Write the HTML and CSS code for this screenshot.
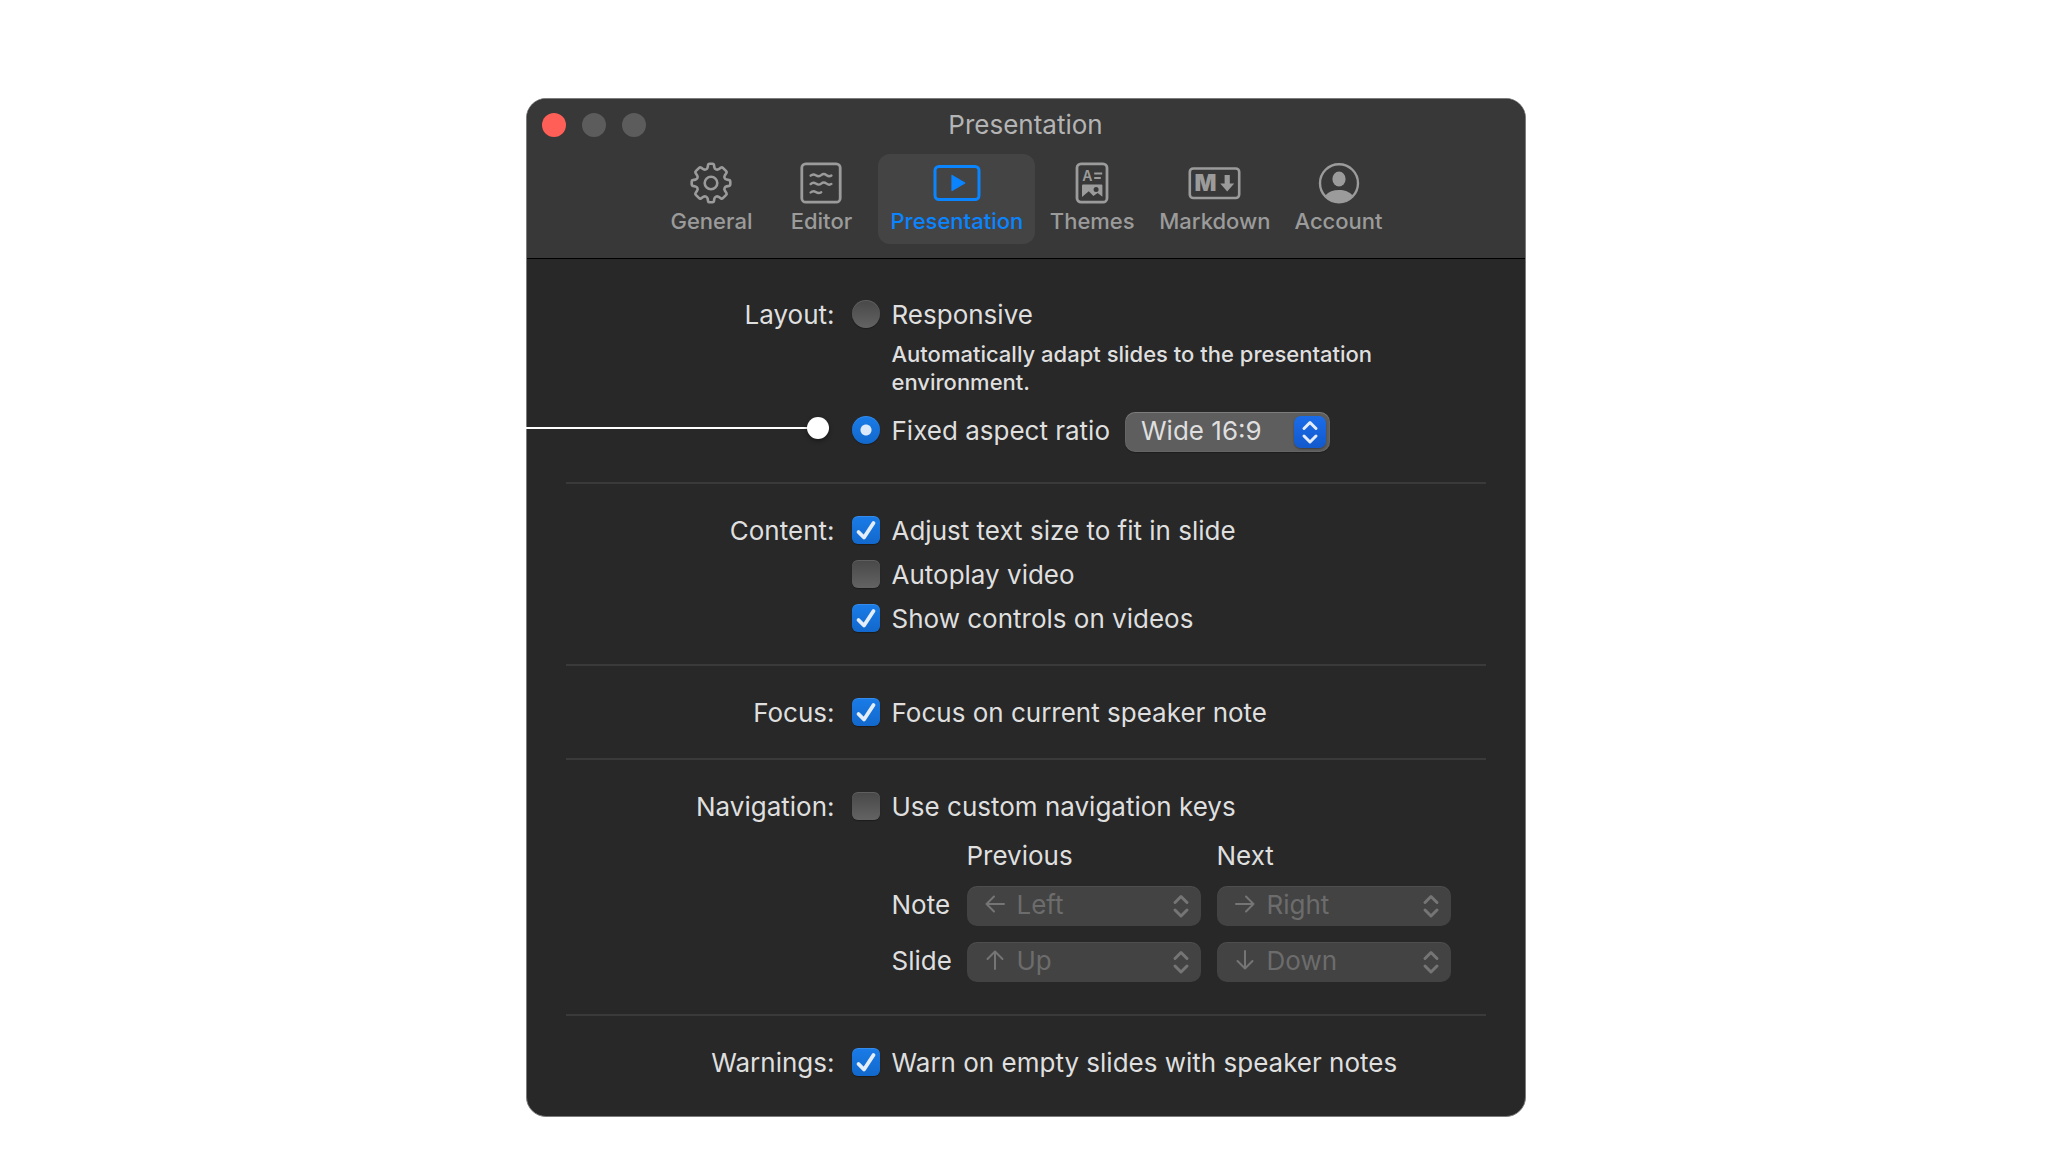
FILE: index.html
```html
<!DOCTYPE html>
<html lang="en">
<head>
<meta charset="utf-8">
<meta name="viewport" content="width=device-width, initial-scale=1">
<title>Presentation</title>
<link rel="stylesheet" href="styles.css">
</head>
<body>
<main class="window">
  <header class="toolbar">
    <div class="titlebar">
      <div class="lights">
        <button class="light light-close" type="button" aria-label="Close"></button>
        <button class="light" type="button" aria-label="Minimize"></button>
        <button class="light" type="button" aria-label="Zoom"></button>
      </div>
      <h1 class="title">Presentation</h1>
    </div>
    <nav class="tabs" aria-label="Settings">
      <button class="tab" type="button">
        <svg class="tab-icon" width="42" height="42" viewBox="-21 -21 42 42" fill="none" stroke="currentColor" stroke-width="2.6" stroke-linejoin="round">
          <path d="M-1.6-19.3H1.6Q2.7-19.3 2.9-18.2L3.4-15.6Q3.7-14.2 5-13.6Q6.3-13 7.6-13.8L9.9-15.4Q11-16.1 11.9-15.2L15.2-11.9Q16.1-11 15.4-9.9L13.8-7.6Q13-6.3 13.6-5Q14.2-3.7 15.6-3.4L18.2-2.9Q19.3-2.7 19.3-1.6V1.6Q19.3 2.7 18.2 2.9L15.6 3.4Q14.2 3.7 13.6 5Q13 6.3 13.8 7.6L15.4 9.9Q16.1 11 15.2 11.9L11.9 15.2Q11 16.1 9.9 15.4L7.6 13.8Q6.3 13 5 13.6Q3.7 14.2 3.4 15.6L2.9 18.2Q2.7 19.3 1.6 19.3H-1.6Q-2.7 19.3-2.9 18.2L-3.4 15.6Q-3.7 14.2-5 13.6Q-6.3 13-7.6 13.8L-9.9 15.4Q-11 16.1-11.9 15.2L-15.2 11.9Q-16.1 11-15.4 9.9L-13.8 7.6Q-13 6.3-13.6 5Q-14.2 3.7-15.6 3.4L-18.2 2.9Q-19.3 2.7-19.3 1.6V-1.6Q-19.3-2.7-18.2-2.9L-15.6-3.4Q-14.2-3.7-13.6-5Q-13-6.3-13.8-7.6L-15.4-9.9Q-16.1-11-15.2-11.9L-11.9-15.2Q-11-16.1-9.9-15.4L-7.6-13.8Q-6.3-13-5-13.6Q-3.7-14.2-3.4-15.6L-2.9-18.2Q-2.7-19.3-1.6-19.3Z"/>
          <circle r="6.3"/>
        </svg>
        <span>General</span>
      </button>
      <button class="tab" type="button">
        <svg class="tab-icon" width="42" height="42" viewBox="0 0 42 42" fill="none" stroke="currentColor" stroke-width="2.8">
          <rect x="1.8" y="1.8" width="38.4" height="38.4" rx="4"/>
          <path stroke-width="2.4" stroke-linecap="round" d="M10.6 13.7C12.4 12 14 12 15.8 13.2S19.4 14.8 21.2 13.2S25 12 26.6 13.2S30 14.6 31.4 13.5M10.6 22.1C12.4 20.4 14 20.4 15.8 21.6S19.4 23.2 21.2 21.6S25 20.4 26.6 21.6S30 23 31.4 21.9M10.6 30.5C12.4 28.8 14 28.8 15.8 30S19.4 31.4 21.2 30.2"/>
        </svg>
        <span>Editor</span>
      </button>
      <button class="tab tab-active" type="button" aria-current="page">
        <svg class="tab-icon" width="48" height="42" viewBox="0 0 48 42">
          <rect x="2" y="4.5" width="44" height="33" rx="4" fill="none" stroke="currentColor" stroke-width="3"/>
          <path d="M19 13.4v15.2L31.8 21Z" fill="currentColor" stroke="currentColor" stroke-width="1.2" stroke-linejoin="round"/>
        </svg>
        <span>Presentation</span>
      </button>
      <button class="tab" type="button">
        <svg class="tab-icon" width="34" height="42" viewBox="0 0 34 42">
          <rect x="2" y="1.8" width="30" height="38.4" rx="4" fill="none" stroke="currentColor" stroke-width="2.8"/>
          <text x="7.2" y="18.6" class="glyph-a">A</text>
          <path d="M19.2 11.4h8M19.2 16h6.6" stroke="currentColor" stroke-width="2"/>
          <path fill="currentColor" fill-rule="evenodd" d="M8 22.5h18.4q1 0 1 1v11.2l-4.8-3.600-4.200 2.800-4.600-4.700-6.800 5.900V23.500q0-1 1-1ZM21.100 25a2.500 2.500 0 1 0 0 5 2.500 2.500 0 0 0 0-5Z"/>
        </svg>
        <span>Themes</span>
      </button>
      <button class="tab" type="button">
        <svg class="tab-icon" width="53" height="42" viewBox="0 0 53 42">
          <rect x="1.8" y="6.5" width="49.4" height="29.5" rx="3.5" fill="none" stroke="currentColor" stroke-width="2.6"/>
          <text x="6.6" y="29.4" class="glyph-m">M</text>
          <path fill="currentColor" d="M36.600 13h5.200v8.600h4.400l-7 7.800-7-7.800h4.400Z"/>
        </svg>
        <span>Markdown</span>
      </button>
      <button class="tab" type="button">
        <svg class="tab-icon" width="42" height="42" viewBox="0 0 42 42">
          <circle cx="21" cy="21.2" r="19" fill="none" stroke="currentColor" stroke-width="2.4"/>
          <ellipse cx="21" cy="17" rx="6.6" ry="7.4" fill="currentColor"/>
          <path fill="currentColor" d="M7.400 33.500C10.400 29.800 15.400 28 21 28s10.600 1.800 13.600 5.500C31 38 26.500 40 21 40S11 38 7.400 33.500Z"/>
        </svg>
        <span>Account</span>
      </button>
    </nav>
  </header>

  <form class="settings">
    <section class="section" role="radiogroup" aria-labelledby="layout-title">
      <h2 class="section-title" id="layout-title">Layout:</h2>
      <div class="fields layout-fields">
        <div class="option">
          <input class="control radio" type="radio" name="layout" id="responsive" aria-describedby="responsive-note">
          <label for="responsive">Responsive</label>
        </div>
        <p class="note" id="responsive-note">Automatically adapt slides to the presentation environment.</p>
        <div class="ratio-row">
          <div class="callout" aria-hidden="true"></div>
          <div class="option option-tall">
            <input class="control radio" type="radio" name="layout" id="fixed" checked>
            <label for="fixed" id="fixed-name">Fixed aspect ratio</label>
          </div>
          <div class="popup popup-ratio">
            <select class="select" aria-labelledby="fixed-name">
              <option>Wide 16:9</option>
            </select>
            <svg class="chevrons chevrons-blue" width="32" height="32" viewBox="0 0 32 32"><path d="M10 12.500 16 6.500l6 6M10 20l6 6 6-6"/></svg>
          </div>
        </div>
      </div>
    </section>

    <section class="section" role="group" aria-labelledby="content-title">
      <h2 class="section-title" id="content-title">Content:</h2>
      <div class="fields">
        <div class="option">
          <input class="control checkbox" type="checkbox" id="fit" checked>
          <label for="fit">Adjust text size to fit in slide</label>
        </div>
        <div class="option">
          <input class="control checkbox" type="checkbox" id="autoplay">
          <label for="autoplay">Autoplay video</label>
        </div>
        <div class="option">
          <input class="control checkbox" type="checkbox" id="controls" checked>
          <label for="controls">Show controls on videos</label>
        </div>
      </div>
    </section>

    <section class="section" role="group" aria-labelledby="focus-title">
      <h2 class="section-title" id="focus-title">Focus:</h2>
      <div class="fields">
        <div class="option">
          <input class="control checkbox" type="checkbox" id="focus" checked>
          <label for="focus">Focus on current speaker note</label>
        </div>
      </div>
    </section>

    <section class="section" role="group" aria-labelledby="navigation-title">
      <h2 class="section-title" id="navigation-title">Navigation:</h2>
      <div class="fields">
        <div class="option">
          <input class="control checkbox" type="checkbox" id="keys">
          <label for="keys">Use custom navigation keys</label>
        </div>
        <div class="keys">
          <span class="keys-previous" id="previous">Previous</span>
          <span id="next">Next</span>
          <label class="keys-label" for="note-previous" id="note">Note</label>
          <div class="popup popup-key">
            <select class="select" id="note-previous" aria-labelledby="note previous" disabled><option>Left</option></select>
            <svg class="arrow" width="20" height="20" viewBox="0 0 20 20"><path d="M19 10H1.500M9 2.500 1.500 10 9 17.500"/></svg>
            <svg class="chevrons" width="32" height="32" viewBox="0 0 32 32"><path d="M10 12.500 16 6.500l6 6M10 20l6 6 6-6"/></svg>
          </div>
          <div class="popup popup-key">
            <select class="select" aria-labelledby="note next" disabled><option>Right</option></select>
            <svg class="arrow" width="20" height="20" viewBox="0 0 20 20"><path d="M1 10h17.500M11 2.500l7.500 7.500-7.500 7.500"/></svg>
            <svg class="chevrons" width="32" height="32" viewBox="0 0 32 32"><path d="M10 12.500 16 6.500l6 6M10 20l6 6 6-6"/></svg>
          </div>
          <label class="keys-label" for="slide-previous" id="slide">Slide</label>
          <div class="popup popup-key">
            <select class="select" id="slide-previous" aria-labelledby="slide previous" disabled><option>Up</option></select>
            <svg class="arrow" width="20" height="20" viewBox="0 0 20 20"><path d="M10 19V1.500M2.500 9 10 1.500 17.500 9"/></svg>
            <svg class="chevrons" width="32" height="32" viewBox="0 0 32 32"><path d="M10 12.500 16 6.500l6 6M10 20l6 6 6-6"/></svg>
          </div>
          <div class="popup popup-key">
            <select class="select" aria-labelledby="slide next" disabled><option>Down</option></select>
            <svg class="arrow" width="20" height="20" viewBox="0 0 20 20"><path d="M10 1v17.500M2.500 11l7.500 7.500 7.500-7.500"/></svg>
            <svg class="chevrons" width="32" height="32" viewBox="0 0 32 32"><path d="M10 12.500 16 6.500l6 6M10 20l6 6 6-6"/></svg>
          </div>
        </div>
      </div>
    </section>

    <section class="section" role="group" aria-labelledby="warnings-title">
      <h2 class="section-title" id="warnings-title">Warnings:</h2>
      <div class="fields">
        <div class="option">
          <input class="control checkbox" type="checkbox" id="warn" checked>
          <label for="warn">Warn on empty slides with speaker notes</label>
        </div>
      </div>
    </section>
  </form>
</main>
</body>
</html>
```

FILE: styles.css
```css
* { box-sizing: border-box; }

body {
  margin: 0;
  padding: 98px 24px 36px 26px;
  background: #fff;
  color: #dfdfdf;
  font: 400 26px/28px Inter, "Liberation Sans", sans-serif;
}

button, input, select { margin: 0; font: inherit; color: inherit; }

.window {
  max-width: 1000px;
  margin: 0 auto;
  border: 1px solid #7c7c7c;
  border-radius: 20px;
  background: #282828;
}

/* Toolbar */
.toolbar {
  padding-bottom: 14px;
  border-bottom: 1px solid #000;
  border-radius: 19px 19px 0 0;
  background: #383838;
}

.titlebar {
  display: grid;
  grid-template-columns: 1fr auto 1fr;
  align-items: center;
  height: 52px;
  padding: 0 15px;
}

.lights { display: flex; gap: 16px; }

.light {
  width: 24px;
  height: 24px;
  padding: 0;
  border: 0;
  border-radius: 50%;
  background: #5c5c5c;
}

.light-close { background: #ff5f57; }

.title {
  margin: 0;
  color: #b4b4b4;
  font-size: 26px;
  font-weight: 400;
}

.tabs {
  display: flex;
  justify-content: center;
  gap: 4px;
  padding-top: 3px;
}

.tab {
  display: flex;
  flex-direction: column;
  align-items: center;
  gap: 3px;
  min-width: 106px;
  height: 90px;
  padding: 8px 10px;
  border: 0;
  border-radius: 12px;
  background: none;
  color: #9b9b9b;
  font-size: 22px;
  font-weight: 500;
}

.tab-active {
  padding: 8px 12px;
  background: #444;
  color: #0a84ff;
}

.glyph-a { font-size: 14px; font-weight: 600; fill: currentColor; }
.glyph-m { font-size: 23px; font-weight: 900; fill: currentColor; }

/* Settings */
.settings { padding: 9px 39px 8px; }

.section {
  display: grid;
  grid-template-columns: minmax(0, 269px) minmax(0, 1fr);
  column-gap: 17px;
  padding: 32px 0;
}

.section + .section { border-top: 2px solid #3a3a3a; }
.section:first-child { padding-bottom: 30px; }

.section-title {
  margin: 0;
  font-size: 26px;
  line-height: 30px;
  height: 28px;
  font-weight: 400;
  text-align: right;
}

.fields { display: flex; flex-direction: column; gap: 16px; }
.layout-fields { gap: 12px; }

.option { display: flex; align-items: center; gap: 12px; height: 28px; }
.option label { padding-top: 2px; }
.option-tall { height: 36px; }

.control {
  flex: none;
  appearance: none;
  width: 28px;
  height: 28px;
  background: linear-gradient(#484848, #636363);
  box-shadow: inset 0 1px 0 #ffffff20, 0 1px 1px #00000050;
}

.radio { border-radius: 50%; }
.checkbox { border-radius: 6px; }
.control:checked { background: linear-gradient(#1a7ce8, #1268cc); }

.radio:checked {
  background: radial-gradient(circle, #dce9fa 5px, transparent 6px), linear-gradient(#1a7ce8, #1268cc);
}

.checkbox:checked {
  background:
    url("data:image/svg+xml,%3Csvg xmlns='http://www.w3.org/2000/svg' viewBox='0 0 28 28'%3E%3Cpath d='M6.500 16 12 21.500 21.500 7' fill='none' stroke='%23e4eefb' stroke-width='3.800' stroke-linecap='round' stroke-linejoin='round'/%3E%3C/svg%3E"),
    linear-gradient(#1a7ce8, #1268cc);
}

.note {
  max-width: 550px;
  margin: 0 0 4px;
  padding-left: 40px;
  font-size: 22px;
  font-weight: 500;
}

.ratio-row { position: relative; display: flex; gap: 15px; }

/* Leader line ending in a dot beside the aspect ratio option */
.callout {
  position: absolute;
  top: 5px;
  right: 100%;
  width: 303px;
  height: 22px;
  margin-right: 23px;
  background: linear-gradient(#fff, #fff) center / 100% 2px no-repeat;
}

.callout::after {
  content: "";
  position: absolute;
  right: 0;
  width: 22px;
  height: 22px;
  border-radius: 50%;
  background: #fff;
  box-shadow: 0 2px 4px #00000060;
}

/* Pop-up menus */
.popup { display: grid; align-items: center; height: 40px; }
.popup > * { grid-area: 1 / 1; }

.select {
  appearance: none;
  width: 100%;
  height: 40px;
  padding: 0 40px 2px 16px;
  border: 0;
  border-radius: 10px;
  background: #5e5e5e;
  box-shadow: inset 0 1px 0 #ffffff28, inset 0 0 0 1px #ffffff0c, 0 1px 1px #00000040;
  line-height: 36px;
}

.popup-ratio { width: 205px; }
.popup-key .select { padding-left: 50px; }

.select:disabled {
  background: #434343;
  color: #6c6c6c;
  opacity: 1;
  box-shadow: inset 0 1px 0 #ffffff10;
}

.arrow, .chevrons {
  pointer-events: none;
  fill: none;
  stroke: #757575;
  stroke-linecap: round;
  stroke-linejoin: round;
}

.arrow { margin: 0 0 4px 18px; stroke-width: 2; }

.chevrons {
  justify-self: end;
  margin-right: 4px;
  stroke-width: 3;
}

.chevrons-blue {
  border-radius: 7px;
  background: linear-gradient(#1b6cea, #1259cc);
  box-shadow: 0 1px 2px #00000060;
  stroke: #e4ecfa;
}

.keys {
  display: grid;
  grid-template-columns: 59px minmax(0, 234px) minmax(0, 234px);
  gap: 16px;
  padding-left: 40px;
  margin-top: 6px;
}

.keys-previous { grid-column: 2; }
.keys-label { line-height: 38px; white-space: nowrap; }
```
